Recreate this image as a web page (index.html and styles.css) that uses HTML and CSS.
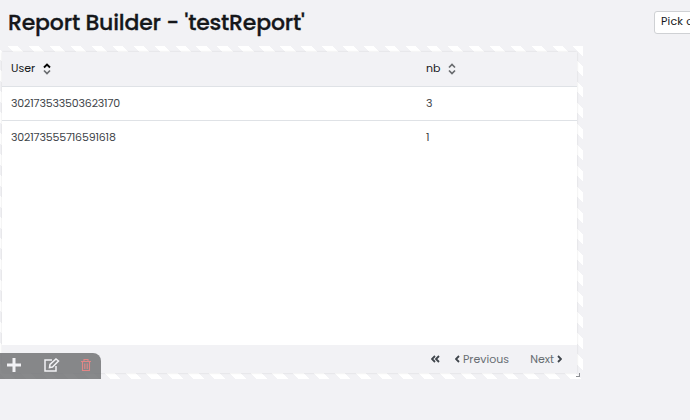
FILE: index.html
```
<!DOCTYPE html>
<html lang="en">
<head>
    <meta charset="UTF-8">
    <meta name="viewport" content="width=device-width, initial-scale=1.0">
    <title>Report Builder</title>
    <link rel="stylesheet" href="styles.css">
</head>
<body>
    <header class="topbar">
        <h1>Report Builder - 'testReport'</h1>
        <button class="picker">Pick a date range</button>
    </header>

    <div class="widget">
        <div class="report">
            <div class="row head">
                <div class="cell">User
                    <svg class="sort" viewBox="0 0 8 12"><path class="up" d="M1 4.5 4 1.5l3 3"/><path d="M1 7.5l3 3 3-3"/></svg>
                </div>
                <div class="cell">nb
                    <svg class="sort" viewBox="0 0 8 12"><path d="M1 4.5 4 1.5l3 3"/><path d="M1 7.5l3 3 3-3"/></svg>
                </div>
            </div>
            <div class="row">
                <div class="cell">302173533503623170</div>
                <div class="cell">3</div>
            </div>
            <div class="row">
                <div class="cell">302173555716591618</div>
                <div class="cell">1</div>
            </div>
            <div class="pager">
                <svg class="first" viewBox="0 0 9 8"><path d="M4 1 1 4l3 3M8 1 5 4l3 3"/></svg>
                <svg class="prev" viewBox="0 0 5 8"><path d="M4 1 1 4l3 3"/></svg>
                <span class="label-prev">Previous</span>
                <span class="label-next">Next</span>
                <svg class="next" viewBox="0 0 5 8"><path d="m1 1 3 3-3 3"/></svg>
            </div>
        </div>

        <!-- Widget actions -->
        <div class="tools">
            <svg class="add" viewBox="0 0 14 14"><path d="M7 0v14M0 7h14"/></svg>
            <svg class="edit" viewBox="0 0 16 14"><path d="M8 2H1v11h11V8"/><path d="m5.5 9.5.5-3L12 1l2.5 2-6 6z"/></svg>
            <svg class="trash" viewBox="0 0 10 12"><path d="M0 2.5h10M3 2V.5h4V2M1.5 3v8.5h7V3M3.8 4.5V10M6.2 4.5V10"/></svg>
        </div>
        <span class="resize"></span>
    </div>
</body>
</html>
```

FILE: styles.css
```
body {
    margin: 0;
    height: 420px;
    overflow: hidden;
    background-color: #f2f2f5;
    color: #15171a;
    font-family: Poppins, Inter, sans-serif;
    font-size: 11px;
}
.topbar {
    display: flex;
    justify-content: space-between;
    height: 46px;
    overflow: hidden;
}
h1 {
    margin: 9px 0 0 8px;
    font-size: 22px;
    line-height: 28px;
    font-weight: 500;
    letter-spacing: -0.19px;
    -webkit-text-stroke: 0.3px #15171a;
    white-space: nowrap;
}
.picker {
    box-sizing: border-box;
    flex-shrink: 0;
    width: 106px;
    height: 23px;
    margin: 11px -70px 0 0;
    padding: 0 6px 3px;
    border: 1px solid #cfd1d4;
    border-radius: 3px;
    background-color: white;
    color: #15171a;
    font: inherit;
    letter-spacing: 0.2px;
    text-align: left;
    white-space: nowrap;
}
.widget {
    position: relative;
    box-sizing: border-box;
    width: 587px;
    height: 333px;
    margin-left: -4px;
    padding: 6px;
    background: repeating-linear-gradient(45deg, #f2f2f5 0, #f2f2f5 6.6px, white 6.6px, white 14px, #f2f2f5 14px, #f2f2f5 14.81px);
}
.report {
    display: flex;
    flex-direction: column;
    height: 321px;
    background-color: white;
    box-shadow: 0 0 2px rgba(0, 0, 0, 0.12);
}
.row {
    display: grid;
    grid-template-columns: 415px 1fr;
    box-sizing: border-box;
    height: 33px;
    color: #41454a;
    letter-spacing: -0.17px;
}
.row + .row + .row {
    height: 34px;
    border-top: 1px solid #dfe2e6;
}
.head {
    height: 35px;
    padding-bottom: 1px;
    border-bottom: 1px solid #dfe2e6;
    background-color: #f2f2f5;
    color: #15171a;
    letter-spacing: 0;
}
.cell {
    display: flex;
    align-items: center;
    padding-left: 9px;
}
.sort {
    width: 8px;
    height: 12px;
    margin-left: 7.5px;
    fill: none;
    stroke: #686b6e;
    stroke-width: 1.7;
}
.sort .up {
    stroke: #050505;
    stroke-width: 1.9;
}
.pager {
    display: flex;
    align-items: center;
    box-sizing: border-box;
    height: 28px;
    margin-top: auto;
    padding: 0 15px 0 429px;
    background-color: #f2f2f5;
    color: #686e73;
}
.pager svg {
    height: 8px;
    fill: none;
    stroke: #3f454b;
    stroke-width: 1.8;
}
.first {
    width: 9px;
    margin-right: 15px;
}
.prev, .next {
    width: 5px;
}
.label-prev {
    margin-left: 3px;
}
.label-next {
    margin: 0 3px 0 auto;
}
.tools {
    position: absolute;
    left: 4px;
    bottom: 0;
    display: flex;
    align-items: center;
    justify-content: space-between;
    box-sizing: border-box;
    width: 101px;
    height: 26px;
    padding: 0 10px 2px 7px;
    border-radius: 0 8px 0 0;
    background-color: rgba(110, 111, 113, 0.82);
}
.tools svg {
    fill: none;
    stroke: #f2f2f5;
    stroke-width: 1.5;
}
.tools .add {
    width: 14px;
    stroke-width: 3;
}
.edit {
    width: 16px;
    margin-left: 1px;
}
.tools .trash {
    width: 10px;
    stroke: #e28686;
    stroke-width: 1.1;
}
.resize {
    position: absolute;
    right: 3px;
    bottom: 2px;
    width: 3px;
    height: 3px;
    border: solid #8e9094;
    border-width: 0 1px 1px 0;
}
```
